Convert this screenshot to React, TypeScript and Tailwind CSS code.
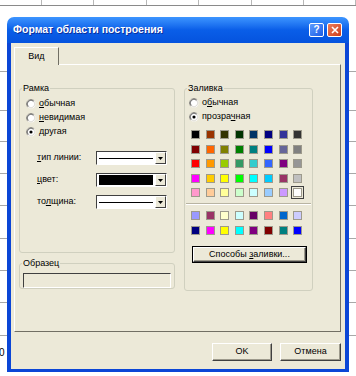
const palette = [
  "#000000", "#993300", "#333300", "#003300", "#003366", "#000080", "#333399", "#333333",
  "#800000", "#ff6600", "#808000", "#008000", "#008080", "#0000ff", "#666699", "#808080",
  "#ff0000", "#ff9900", "#99cc00", "#339966", "#33cccc", "#3366ff", "#800080", "#969696",
  "#ff00ff", "#ffcc00", "#ffff00", "#00ff00", "#00ffff", "#00ccff", "#993366", "#c0c0c0",
  "#ff99cc", "#ffcc99", "#ffff99", "#ccffcc", "#ccffff", "#99ccff", "#cc99ff", "#ffffff",
];

const extra = [
  "#9999ff", "#993366", "#ffffcc", "#ccffff", "#660066", "#ff8080", "#0066cc", "#ccccff",
  "#000080", "#ff00ff", "#ffff00", "#00ffff", "#800080", "#800000", "#008080", "#0000ff",
];

// sheet rows behind the dialog
const rowHeights = [66, 39, 31, 32, 32, 33, 32, 32, 33];
const colWidths = [42, 52, 53, 52, 53, 52, 52];

const Radio = ({ checked }: { checked?: boolean }) => (
  <svg width="10" height="10" viewBox="0 0 12 12" className="shrink-0">
    <circle cx="6" cy="6" r="5.5" fill="#fff" />
    <path d="M9.9 2.1A5.5 5.5 0 0 0 2.1 9.9" fill="none" stroke="#9a9890" strokeWidth="1" />
    <path d="M9.2 2.8A4.5 4.5 0 0 0 2.8 9.2" fill="none" stroke="#404040" strokeWidth="1" />
    <path d="M9.2 2.8A4.5 4.5 0 0 1 2.8 9.2" fill="none" stroke="#d4d0c8" strokeWidth="1" />
    {checked && <circle cx="6" cy="6" r="1.9" fill="#000" />}
  </svg>
);

const RadioRow = ({ checked, children }: { checked?: boolean; children: React.ReactNode }) => (
  <div className="flex h-[14px] items-center gap-[3px]">
    <Radio checked={checked} />
    <span>{children}</span>
  </div>
);

const Combo = ({ black }: { black?: boolean }) => (
  <div className="flex h-[14px] w-[71px] border border-t-[#404040] border-l-[#404040] border-r-white border-b-white bg-white">
    <div className="flex flex-1 items-center px-[2px]">
      {black ? (
        <div className="h-[10px] w-full bg-black" />
      ) : (
        <div className="h-px w-full bg-black" />
      )}
    </div>
    <div className="flex w-[11px] items-center justify-center border border-t-white border-l-white border-r-[#404040] border-b-[#404040] bg-[#ece9d8]">
      <svg width="5" height="3" viewBox="0 0 5 3">
        <path d="M0 0h5L2.5 3z" fill="#000" />
      </svg>
    </div>
  </div>
);

const Button = ({ children, w }: { children: React.ReactNode; w: string }) => (
  <div
    className={`${w} flex h-[18px] items-center justify-center border border-t-white border-l-white border-r-[#404040] border-b-[#404040] bg-[#ece9d8] shadow-[inset_-1px_-1px_0_#9d9a8c]`}
  >
    <span>{children}</span>
  </div>
);

export default function App() {
  return (
    <div className="relative h-[376px] w-[356px] overflow-hidden bg-white font-['Liberation_Sans',Arial,sans-serif] text-[9px] text-black">
      {/* spreadsheet behind */}
      <div className="flex h-[6px] border-b border-[#8a8a8a]">
        {colWidths.map((w, i) => (
          <div key={i} className="h-full border-r border-[#b8b8b8]" style={{ width: w }} />
        ))}
      </div>
      {rowHeights.map((h, i) => (
        <div key={i} className="border-b border-[#a8a8a8]" style={{ height: h }} />
      ))}
      <div className="ml-[-1px] mt-[12px] text-[10px] leading-none">0</div>

      {/* dialog */}
      <div className="absolute left-[7px] top-[17px] flex h-[355px] w-[342px] flex-col">
        <div className="flex h-[26px] items-center rounded-t-[7px] bg-gradient-to-b from-[#3d95ff] via-[#0a5ee8] to-[#0553de] pl-[6px] pr-[7px]">
          <span className="flex-1 text-[10.5px] font-bold text-white [text-shadow:1px_1px_0_#0b2f9c]">
            Формат области построения
          </span>
          <div className="flex gap-[3px]">
            <div className="flex h-[14px] w-[15px] items-center justify-center rounded-[2px] border border-white bg-gradient-to-br from-[#5d9bff] to-[#1c5be4] text-[10px] font-bold leading-none text-white">
              ?
            </div>
            <div className="flex h-[14px] w-[15px] items-center justify-center rounded-[2px] border border-white bg-gradient-to-br from-[#ec7d5a] to-[#cc3a15]">
              <svg width="8" height="8" viewBox="0 0 8 8">
                <path d="M1 1l6 6M7 1L1 7" stroke="#fff" strokeWidth="1.6" />
              </svg>
            </div>
          </div>
        </div>

        <div className="flex flex-1 flex-col border-x-4 border-b-[3px] border-[#0b46d6] bg-[#ece9d8]">
          {/* tab strip */}
          <div className="pl-[3px] pt-[4px]">
            <div className="relative z-10 -mb-px flex h-[18px] w-[45px] items-center justify-center border-l border-r border-t border-l-white border-r-[#716f64] border-t-white bg-[#ece9d8]">
              Вид
            </div>
          </div>

          {/* tab panel */}
          <div className="ml-[3px] mr-[4px] flex h-[268px] border border-t-white border-l-white border-r-[#716f64] border-b-[#716f64] pl-[4px] pt-[17px]">
            <div className="flex w-[156px] flex-col gap-[4px]">
              <fieldset className="h-[171px] rounded-[3px] border border-[#d0d0bf] px-[2px]">
                <legend className="px-px leading-[13px]">Рамка</legend>
                <div className="flex flex-col pl-[4px] pt-[2px]">
                  <RadioRow>
                    <u>о</u>бычная
                  </RadioRow>
                  <RadioRow>
                    <u>н</u>евидимая
                  </RadioRow>
                  <RadioRow checked>
                    <u>д</u>ругая
                  </RadioRow>
                  <div className="mt-[12px] flex flex-col gap-[8px] pl-[11px]">
                    <div className="flex items-center">
                      <span className="w-[59px]">
                        <u>т</u>ип линии:
                      </span>
                      <Combo />
                    </div>
                    <div className="flex items-center">
                      <span className="w-[59px]">
                        <u>ц</u>вет:
                      </span>
                      <Combo black />
                    </div>
                    <div className="flex items-center">
                      <span className="w-[59px]">
                        то<u>л</u>щина:
                      </span>
                      <Combo />
                    </div>
                  </div>
                </div>
              </fieldset>

              <fieldset className="h-[32px] rounded-[3px] border border-[#d0d0bf] px-[3px]">
                <legend className="-ml-px px-px leading-[13px]">Образец</legend>
                <div className="mt-[3px] h-[15px] border border-t-[#404040] border-l-[#404040] border-r-white border-b-white bg-[#ece9d8]" />
              </fieldset>
            </div>

            <fieldset className="ml-[9px] h-[209px] w-[129px] rounded-[3px] border border-[#d0d0bf] px-[2px]">
              <legend className="px-px leading-[13px]">Заливка</legend>
              <div className="flex flex-col pl-[2px] pt-px">
                <RadioRow>
                  о<u>б</u>ычная
                </RadioRow>
                <RadioRow checked>
                  прозра<u>ч</u>ная
                </RadioRow>
              </div>
              <div className="ml-[4px] mt-[6px] grid w-fit grid-cols-[repeat(8,9px)] gap-[5.6px]">
                {palette.map((c, i) => (
                  <div
                    key={i}
                    className={`h-[9px] w-[9px] border border-[#9d9a8c] ${i === 39 ? "outline outline-1 outline-offset-[1px] outline-[#404040]" : ""}`}
                    style={{ background: c }}
                  />
                ))}
              </div>
              <div className="mx-[-1px] mt-[6px] h-[2px] border-b border-t border-b-white border-t-[#b8b4a2]" />
              <div className="ml-[4px] mt-[6px] grid w-fit grid-cols-[repeat(8,9px)] gap-[5.6px]">
                {extra.map((c, i) => (
                  <div key={i} className="h-[9px] w-[9px] border border-[#9d9a8c]" style={{ background: c }} />
                ))}
              </div>
              <div className="ml-[5px] mt-[11px] w-[115px] border border-black">
                <div className="flex h-[15px] items-center justify-center border border-t-white border-l-white border-r-[#404040] border-b-[#404040] shadow-[inset_-1px_-1px_0_#9d9a8c]">
                  <span>
                    Способы <u>з</u>аливки...
                  </span>
                </div>
              </div>
            </fieldset>
          </div>

          {/* buttons */}
          <div className="mt-[11px] flex justify-end gap-[8px] pr-[4px]">
            <Button w="w-[60px]">OK</Button>
            <Button w="w-[61px]">Отмена</Button>
          </div>
        </div>
      </div>
    </div>
  );
}
